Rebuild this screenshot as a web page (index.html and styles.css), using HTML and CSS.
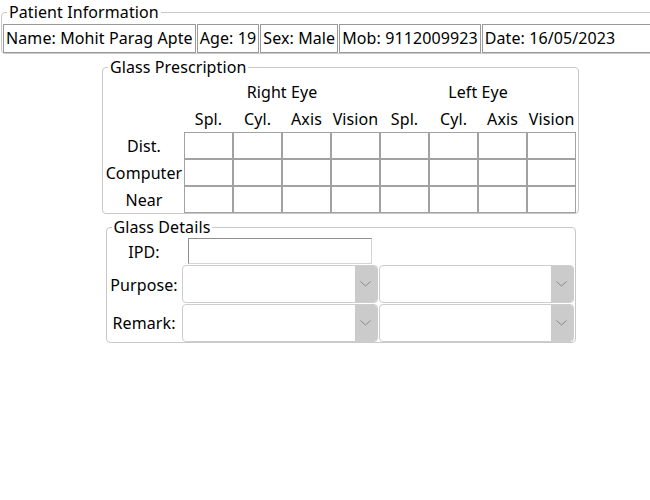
FILE: index.html
```html
<!DOCTYPE html>
<html lang="en">
<head>
<meta charset="utf-8">
<title>Patient Prescription</title>
<link rel="stylesheet" href="styles.css">
</head>
<body>
<div class="page">
  <fieldset class="box patient">
    <legend>Patient Information</legend>
    <div class="pi-row">
      <span class="pi">Name: Mohit Parag Apte</span>
      <span class="pi">Age: 19</span>
      <span class="pi">Sex: Male</span>
      <span class="pi">Mob: 9112009923</span>
      <span class="pi pi-last">Date: 16/05/2023</span>
    </div>
  </fieldset>

  <fieldset class="box rx">
    <legend>Glass Prescription</legend>
    <table class="rx-table">
      <colgroup>
        <col class="c-label">
        <col class="c-cell"><col class="c-cell"><col class="c-cell"><col class="c-cell">
        <col class="c-cell"><col class="c-cell"><col class="c-cell"><col class="c-cell">
      </colgroup>
      <tr class="hrow">
        <td></td>
        <td colspan="4">Right Eye</td>
        <td colspan="4">Left Eye</td>
      </tr>
      <tr class="hrow">
        <td></td>
        <td>Spl.</td><td>Cyl.</td><td>Axis</td><td>Vision</td>
        <td>Spl.</td><td>Cyl.</td><td>Axis</td><td>Vision</td>
      </tr>
      <tr class="drow">
        <td class="rlabel">Dist.</td>
        <td><input class="cell" type="text"></td><td><input class="cell" type="text"></td><td><input class="cell" type="text"></td><td><input class="cell" type="text"></td>
        <td><input class="cell" type="text"></td><td><input class="cell" type="text"></td><td><input class="cell" type="text"></td><td><input class="cell" type="text"></td>
      </tr>
      <tr class="drow">
        <td class="rlabel">Computer</td>
        <td><input class="cell" type="text"></td><td><input class="cell" type="text"></td><td><input class="cell" type="text"></td><td><input class="cell" type="text"></td>
        <td><input class="cell" type="text"></td><td><input class="cell" type="text"></td><td><input class="cell" type="text"></td><td><input class="cell" type="text"></td>
      </tr>
      <tr class="drow">
        <td class="rlabel">Near</td>
        <td><input class="cell" type="text"></td><td><input class="cell" type="text"></td><td><input class="cell" type="text"></td><td><input class="cell" type="text"></td>
        <td><input class="cell" type="text"></td><td><input class="cell" type="text"></td><td><input class="cell" type="text"></td><td><input class="cell" type="text"></td>
      </tr>
    </table>
  </fieldset>

  <fieldset class="box gd">
    <legend>Glass Details</legend>
    <div class="gd-grid">
      <div class="glabel">IPD:</div>
      <div class="ipd-wrap"><input class="ipd" type="text"></div>
      <div></div>

      <div class="glabel">Purpose:</div>
      <div class="sel"><span class="arrow"><svg width="11" height="6" viewBox="0 0 11 6"><path d="M0.5 0.5 L5.5 5 L10.5 0.5" fill="none" stroke="#8a8a8a" stroke-width="1"/></svg></span></div>
      <div class="sel"><span class="arrow"><svg width="11" height="6" viewBox="0 0 11 6"><path d="M0.5 0.5 L5.5 5 L10.5 0.5" fill="none" stroke="#8a8a8a" stroke-width="1"/></svg></span></div>

      <div class="glabel">Remark:</div>
      <div class="sel"><span class="arrow"><svg width="11" height="6" viewBox="0 0 11 6"><path d="M0.5 0.5 L5.5 5 L10.5 0.5" fill="none" stroke="#8a8a8a" stroke-width="1"/></svg></span></div>
      <div class="sel"><span class="arrow"><svg width="11" height="6" viewBox="0 0 11 6"><path d="M0.5 0.5 L5.5 5 L10.5 0.5" fill="none" stroke="#8a8a8a" stroke-width="1"/></svg></span></div>
    </div>
  </fieldset>
</div>
</body>
</html>
```

FILE: styles.css
```css
html, body {
  margin: 0;
  padding: 0;
  overflow: hidden;
  background: #fff;
}

body {
  font-family: "Noto Sans", "Open Sans", sans-serif;
  font-size: 16px;
  letter-spacing: 0.1px;
  color: #000;
}

.page {
  width: 681px;
}

.box {
  border: 1px solid #c8c8c8;
  border-radius: 4px;
  padding: 0;
  margin: 0 auto;
  min-width: 0;
}

.box legend {
  padding: 0 2px;
  margin-left: 5px;
  line-height: 22px;
  font-size: 16px;
}

/* Patient information */
.patient {
  margin: 0 1px;
}

.patient legend {
  line-height: 24px;
}

.pi-row {
  display: flex;
  gap: 1px;
  padding-left: 1px;
}

.pi {
  border: 1px solid #9a9a9a;
  padding: 0 2px;
  line-height: 27px;
  white-space: nowrap;
}

.pi-last {
  flex: 1;
}

/* Glass prescription */
.rx {
  width: 477px;
  box-sizing: border-box;
  margin-top: 2px;
}

.rx-table {
  border-collapse: collapse;
  border-spacing: 0;
  margin-left: 1px;
  table-layout: fixed;
  width: 472px;
}

.c-label { width: 80px; }
.c-cell { width: 49px; }

.rx-table td {
  padding: 0;
  text-align: center;
  white-space: nowrap;
}

.hrow td {
  height: 27px;
}

.drow td {
  height: 27px;
}

.cell {
  display: block;
  box-sizing: border-box;
  width: 49px;
  height: 27px;
  margin: 0;
  padding: 0;
  border: 1px solid #a2a2a2;
  background: #fff;
  font: inherit;
}

/* Glass details */
.gd {
  width: 470px;
  box-sizing: border-box;
  margin-top: 2px;
}

.gd-grid {
  display: grid;
  grid-template-columns: 75px 196px 196px;
  grid-template-rows: 27px 39px 38px;
  column-gap: 0;
}

.glabel {
  text-align: center;
  display: flex;
  align-items: center;
  justify-content: center;
  white-space: nowrap;
}

.ipd-wrap {
  display: flex;
  justify-content: center;
  align-items: flex-start;
}

.ipd {
  box-sizing: border-box;
  width: 184px;
  height: 26px;
  margin: 0;
  padding: 0;
  border: 1px solid;
  border-color: #8e8e8e #d4d4d4 #d4d4d4 #8e8e8e;
  background: #fff;
  font: inherit;
}

.sel {
  box-sizing: border-box;
  height: 38px;
  border: 1px solid #cdcdcd;
  border-radius: 4px;
  overflow: hidden;
  display: flex;
  justify-content: flex-end;
  background: #fff;
}

.gd-grid .sel:nth-child(3n) {
  margin-left: 1px;
}

.arrow {
  width: 22px;
  background: #cbcbcb;
  display: flex;
  align-items: center;
  justify-content: center;
}
```
